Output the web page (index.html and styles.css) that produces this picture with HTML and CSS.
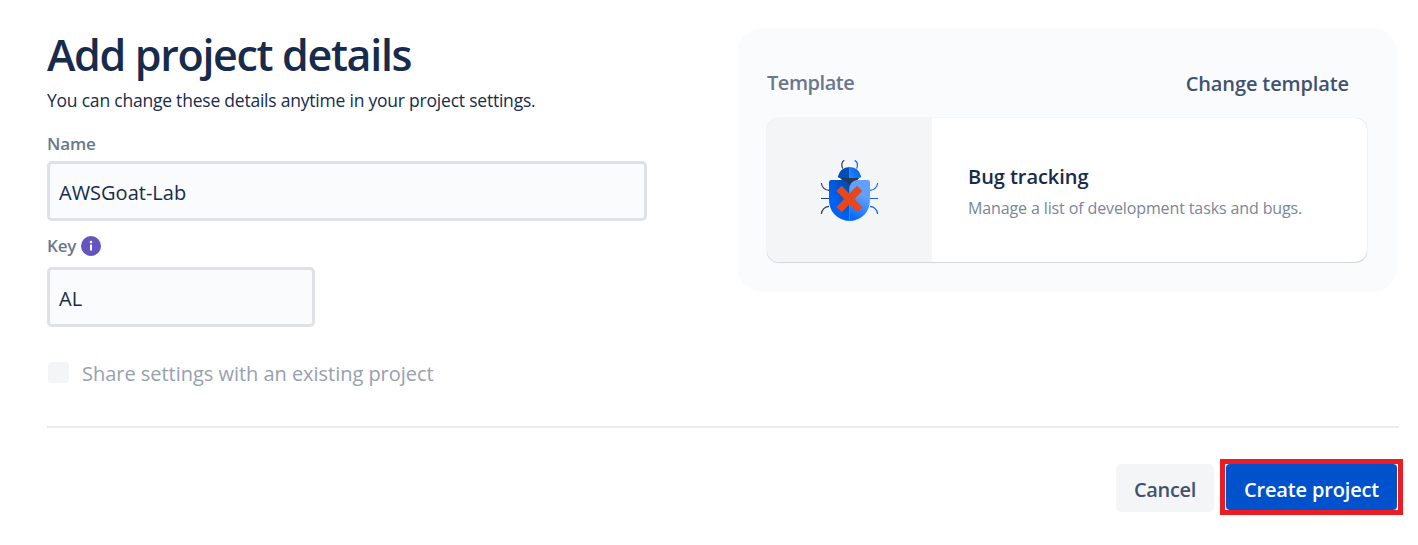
FILE: index.html
```html
<!DOCTYPE html>
<html lang="en">
<head>
<meta charset="utf-8">
<title>Add project details</title>
<link rel="stylesheet" href="styles.css">
</head>
<body>
<main class="page">
  <div class="columns">
    <form class="details">
      <h1 class="title">Add project details</h1>
      <p class="subtitle">You can change these details anytime in your project settings.</p>
      <div class="label label-name">Name</div>
      <div class="field field-name"><span class="value">AWSGoat-Lab</span></div>
      <div class="label label-key"><span class="key-text">Key</span>
        <svg class="info" viewBox="0 0 20 20"><circle cx="10" cy="10" r="10" fill="#6554c0"/><circle cx="10" cy="6" r="1.3" fill="#fff"/><rect x="9" y="8.4" width="2" height="6.2" rx=".4" fill="#fff"/></svg>
      </div>
      <div class="field field-key"><span class="value value-key">AL</span></div>
      <div class="share"><span class="checkbox"></span><span class="share-text">Share settings with an existing project</span></div>
    </form>
    <section class="panel">
      <div class="panel-head"><span class="template">Template</span><span class="change">Change template</span></div>
      <div class="card">
        <div class="thumb">
          <svg class="bug" viewBox="60 24 177 192" fill="none">
            <defs>
              <linearGradient id="left" x1="100" y1="150" x2="149" y2="120" gradientUnits="userSpaceOnUse"><stop stop-color="#0062f5"/><stop offset="1" stop-color="#004db3"/></linearGradient>
              <linearGradient id="right" x1="145" y1="205" x2="185" y2="135" gradientUnits="userSpaceOnUse"><stop stop-color="#0065ff"/><stop offset="1" stop-color="#629fff"/></linearGradient>
              <linearGradient id="head" x1="149" y1="80" x2="182" y2="60" gradientUnits="userSpaceOnUse"><stop stop-color="#2684ff"/><stop offset="1" stop-color="#0060ee"/></linearGradient>
            </defs>
            <g stroke="#2c3e5d" stroke-width="3.6">
              <path d="M133 31Q121 37 128 56M64 99Q67 119 87 121M63 145.5H88M64 192Q67 171 87 169"/>
            </g>
            <g stroke="#0b68ff" stroke-width="3.6">
              <path d="M164 31Q177 37 170 56M233 99Q230 119 210 121M209 145.5H234M233 192Q230 171 210 169"/>
            </g>
            <path d="M120 84H178L149 113Z" fill="#253858"/>
            <path d="M149 51Q119 53 114 79Q114 84 119 84H149Z" fill="#004fb9"/>
            <path d="M149 51Q178 53 183 79Q183 84 178 84H149Z" fill="url(#head)"/>
            <path d="M94 90H128Q144 92 149 109V213C111 211 87 184 87 149V97Q87 90 94 90Z" fill="url(#left)"/>
            <path d="M203 90H170Q154 92 149 109V213C187 211 210 184 210 149V97Q210 90 203 90Z" fill="url(#right)"/>
            <path d="M117 115L179 179M179 115L117 179" stroke="#e8471b" stroke-width="22"/>
          </svg>
        </div>
        <div class="info-text">
          <div class="card-title">Bug tracking</div>
          <div class="card-desc">Manage a list of development tasks and bugs.</div>
        </div>
      </div>
    </section>
  </div>
  <footer class="actions">
    <div class="cancel"><span>Cancel</span></div>
    <div class="highlight"><div class="create"><span>Create project</span></div></div>
  </footer>
</main>
</body>
</html>
```
FILE: styles.css
```css
* { box-sizing: border-box; }
body {
  margin: 0;
  background: #fff;
  color: #172b4d;
  font-family: "Open Sans", "Noto Sans", sans-serif;
  font-size: 20px;
  white-space: nowrap;
}
.page { width: 1418px; height: 545px; padding: 28px 0 0 47px; }
.columns { display: flex; align-items: flex-start; gap: 91px; height: 398px; }
.details { width: 600px; }
.title { margin: 0; height: 60px; line-height: 53px; font-size: 43px; font-weight: 600; letter-spacing: -1.33px; }
.subtitle { margin: 0; height: 26px; line-height: 25px; font-size: 17.5px; letter-spacing: -.22px; }
.label { display: flex; align-items: center; color: #6b778c; font-size: 17px; font-weight: 600; letter-spacing: -.15px; }
.label-name { height: 28px; margin: 15px 0 4px; }
.field { display: flex; align-items: center; height: 60px; padding: 2px 0 0 9px; border: 3px solid #dfe1e6; border-radius: 5px; background: #fafbfc; }
.field-key { width: 268px; }
.label-key { height: 46px; gap: 5px; padding-top: 4px; }
.key-text { margin-top: -2px; }
.info { width: 20px; height: 20px; }
.share { display: flex; align-items: center; gap: 13px; height: 28px; margin: 31px 0 0 1px; color: #97a0af; }
.share-text { padding-top: 2px; letter-spacing: -.03px; }
.checkbox { width: 21px; height: 21px; border-radius: 4px; background: #f4f5f7; }
.panel { width: 659px; height: 264px; padding: 38px 30px 0 28px; border-radius: 24px; background: #fafbfc; }
.panel-head { display: flex; justify-content: space-between; height: 52px; padding: 0 18px 0 1px; line-height: 34px; font-weight: 600; color: #6b778c; }
.template { letter-spacing: -.45px; }
.change { padding-top: 1px; letter-spacing: -.12px; color: #42526e; }
.card { display: flex; width: 600px; height: 144px; margin-left: 1px; border-radius: 12px; overflow: hidden; background: #fff; box-shadow: 0 1px 1px rgba(9,30,66,.15), 0 0 1px rgba(9,30,66,.25); }
.thumb { width: 165px; padding: 40px 0 0 53px; background: #f4f5f7; }
.bug { display: block; width: 59px; height: 64px; }
.info-text { padding: 43px 0 0 36px; }
.card-title { height: 33px; line-height: 32px; font-weight: 600; letter-spacing: -.05px; }
.card-desc { height: 28px; line-height: 28px; font-size: 16px; letter-spacing: -.12px; color: #7a869a; }
.actions { display: flex; justify-content: flex-end; align-items: flex-start; gap: 6px; width: 1352px; height: 90px; border-top: 2px solid #ebecf0; font-weight: 600; }
.cancel { display: flex; align-items: center; justify-content: center; width: 98px; height: 48px; margin-top: 36px; padding-top: 3px; border-radius: 5px; background: #f4f5f7; color: #42526e; letter-spacing: -.3px; }
.highlight { width: 183px; height: 56px; margin: 31px -4px 0 0; border: 5px solid #ed1c24; background: #fff; }
.create { display: flex; align-items: center; justify-content: center; width: 171px; height: 46px; margin-left: 1px; padding-top: 5px; border-radius: 4px; background: #0052cc; color: #fff; letter-spacing: -.15px; }
```
